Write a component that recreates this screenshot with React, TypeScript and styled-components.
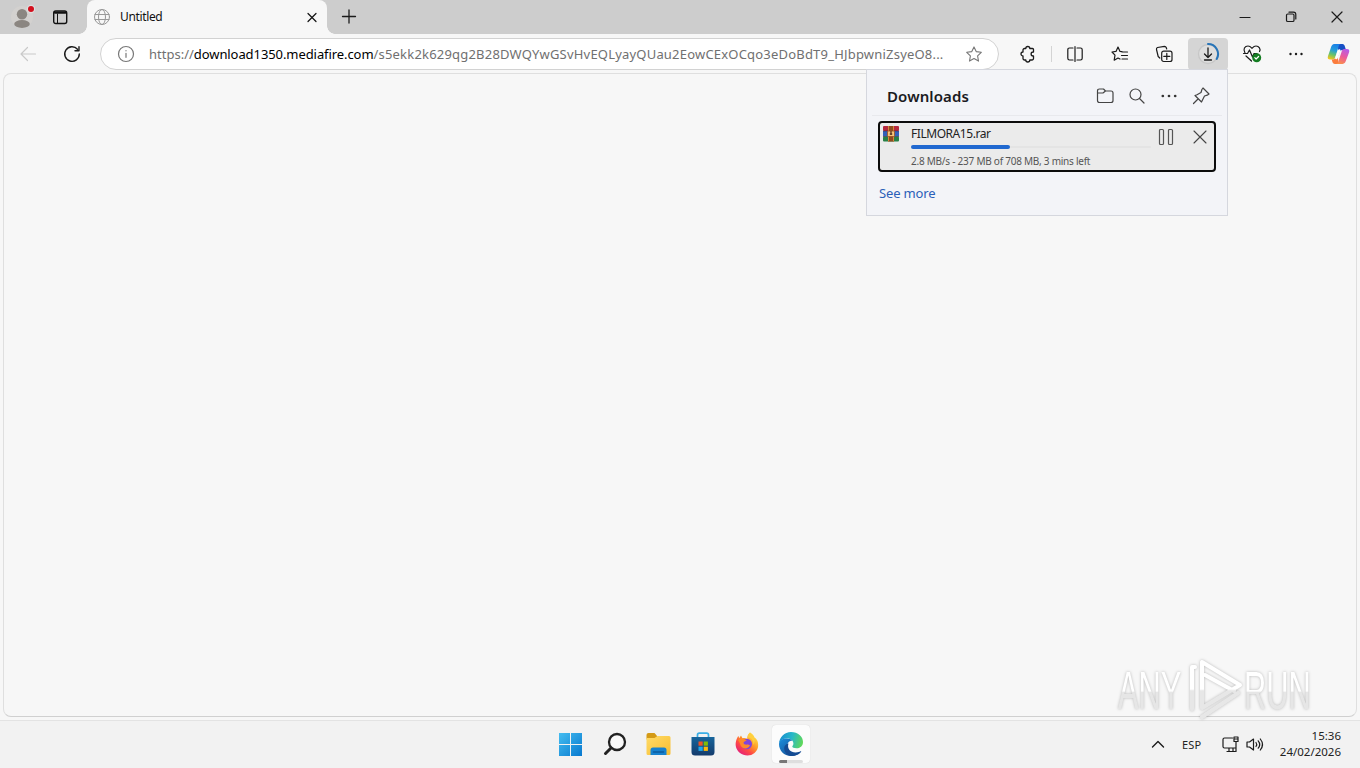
import React from 'react';
import styled, { createGlobalStyle } from 'styled-components';

const GlobalStyle = createGlobalStyle`
    * {
        box-sizing: border-box;
    }

    body {
        margin: 0;
        overflow: hidden;
        background: #f2f2f2;
        font-family: "Noto Sans", "Open Sans", sans-serif;
    }

    svg {
        display: block;
        flex: none;
        overflow: visible;
    }
`;

const Desktop = styled.div`
    width: 1360px;
    height: 768px;
    display: flex;
    flex-direction: column;
    background: #f7f7f7;
    color: #1b1b1b;
`;

/* Tab strip */

const TabStrip = styled.div`
    height: 34px;
    flex: none;
    display: flex;
    background: #cdcdcd;
`;

const StripStart = styled.div`
    width: 87px;
    display: flex;
    align-items: center;
    padding-left: 12px;
    gap: 18px;
`;

const Tab = styled.div`
    position: relative;
    width: 240px;
    height: 34px;
    display: flex;
    align-items: center;
    padding: 0 8px 0 7px;
    background: #f7f7f7;
    border-radius: 8px 8px 0 0;

    &::before,
    &::after {
        content: "";
        position: absolute;
        bottom: 0;
        width: 8px;
        height: 8px;
    }

    &::before {
        left: -8px;
        background: radial-gradient(circle at 0 0, #cdcdcd 7.5px, #f7f7f7 8px);
    }

    &::after {
        right: -8px;
        background: radial-gradient(circle at 100% 0, #cdcdcd 7.5px, #f7f7f7 8px);
    }
`;

const TabTitle = styled.span`
    flex: 1;
    margin-left: 10px;
    font-size: 12px;
    line-height: 16px;
    letter-spacing: -0.35px;
    color: #111;
`;

const NewTab = styled.div`
    width: 43px;
    display: grid;
    place-items: center;
`;

const WindowButtons = styled.div`
    display: flex;
    margin-left: auto;
`;

const WindowButton = styled.div`
    width: 46px;
    display: grid;
    place-items: center;
`;

/* Toolbar */

const Toolbar = styled.div`
    height: 39px;
    flex: none;
    display: flex;
    align-items: flex-start;
    padding-top: 4px;
`;

const ToolButton = styled.div<{ $width: number; $active?: boolean }>`
    width: ${({ $width }) => $width}px;
    height: 32px;
    flex: none;
    display: grid;
    place-items: center;
    border-radius: 4px;
    background: ${({ $active }) => ($active ? '#d5d5d5' : 'transparent')};
`;

const Divider = styled.div`
    width: 1px;
    height: 16px;
    margin: 8px 1px 0 3px;
    background: #d4d4d4;
`;

const AddressBar = styled.div`
    width: 899px;
    height: 32px;
    display: flex;
    align-items: center;
    margin: 0 8px 0 12px;
    padding: 0 15px 0 17px;
    background: #fff;
    border: 1px solid #d2d2d2;
    border-radius: 16px;
`;

const Url = styled.div`
    width: 797px;
    margin: 0 20px 0 15px;
    display: flex;
    font-size: 13px;
    line-height: 18px;
    white-space: nowrap;
    color: #707070;
`;

const UrlPart = styled.span<{ $spacing: number; $strong?: boolean }>`
    letter-spacing: ${({ $spacing }) => $spacing}px;
    color: ${({ $strong }) => ($strong ? '#000' : 'inherit')};
`;

/* Page */

const PageArea = styled.div`
    position: relative;
    height: 644px;
    flex: none;
    margin: 0 3px;
    border: 1px solid #dfdfdf;
    border-bottom-color: #d0d0d0;
    border-radius: 8px;
    background: #f7f7f7;
`;

const Watermark = styled.div`
    position: absolute;
    left: 1114px;
    top: 584px;
    width: 196px;
    height: 62px;
    display: flex;
    align-items: center;
    filter: drop-shadow(0 0 1.5px rgba(0, 0, 0, 0.25));
`;

const MarkWord = styled.div<{ $width: number }>`
    width: ${({ $width }) => $width}px;
    height: 62px;
    flex: none;

    span {
        display: block;
        width: 125px;
        font-family: "Liberation Sans", Arial, sans-serif;
        font-size: 54px;
        line-height: 64px;
        transform: scaleX(0.57);
        transform-origin: 0 0;
        color: transparent;
        background: linear-gradient(#fff 52%, #e6e6e6 53%);
        background-clip: text;
    }
`;

/* Downloads flyout */

const Flyout = styled.div`
    position: absolute;
    left: 866px;
    top: 69px;
    width: 362px;
    height: 147px;
    background: #f3f4f8;
    border: 1px solid #d5d7de;
`;

const FlyoutHeader = styled.div`
    height: 46px;
    margin: 0 5px;
    display: flex;
    align-items: center;
    padding: 6px 12px 0 15px;
    border-bottom: 1px solid #e8e9ed;
`;

const FlyoutTitle = styled.div`
    flex: 1;
    font-size: 15px;
    line-height: 20px;
    font-weight: 600;
    letter-spacing: 0.1px;
    color: #1b1b1f;
`;

const FlyoutActions = styled.div`
    display: flex;
    gap: 14px;
`;

const DownloadItem = styled.div`
    width: 338px;
    height: 51px;
    display: flex;
    margin: 5px 0 0 11px;
    padding: 3px 6px 0 3px;
    background: #ebebeb;
    border: 2px solid #0c0c0c;
    border-radius: 4px;
`;

const DownloadInfo = styled.div`
    width: 240px;
    margin-left: 12px;
`;

const FileName = styled.div`
    font-size: 12px;
    line-height: 16px;
    letter-spacing: -0.45px;
    color: #222;
`;

const ProgressTrack = styled.div`
    height: 4px;
    margin-top: 3px;
    border-radius: 2px;
    background: linear-gradient(#ebebeb 25%, #e4e4e4 25%, #e4e4e4 75%, #ebebeb 75%);
`;

const ProgressFill = styled.div`
    height: 4px;
    border-radius: 2px;
    background: #2169d0;
`;

const FileStatus = styled.div`
    margin-top: 5px;
    font-size: 10px;
    line-height: 14px;
    letter-spacing: -0.24px;
    white-space: nowrap;
    color: #555;
`;

const DownloadButtons = styled.div`
    display: flex;
    gap: 18px;
    margin-left: auto;
    padding-top: 3px;
`;

const SeeMore = styled.div`
    margin: 12px 0 0 12px;
    font-size: 13px;
    line-height: 18px;
    letter-spacing: -0.15px;
    color: #2b5fb8;
`;

/* Taskbar */

const Taskbar = styled.div`
    height: 48px;
    flex: none;
    margin-top: 3px;
    display: grid;
    grid-template-columns: 1fr auto 1fr;
    align-items: center;
    padding-bottom: 1px;
    border-top: 1px solid #e3e3e3;
    background: #f2f2f2;
`;

const Pinned = styled.div`
    grid-column: 2;
    display: flex;
    gap: 6px;
    padding-left: 1px;
`;

const PinnedApp = styled.div<{ $active?: boolean }>`
    position: relative;
    width: 38px;
    height: 38px;
    display: grid;
    place-items: center;
    border-radius: 4px;
    background: ${({ $active }) => ($active ? '#fcfcfc' : 'transparent')};
    box-shadow: ${({ $active }) => ($active ? '0 0 1px #ccc' : 'none')};
`;

const RunningMark = styled.div`
    position: absolute;
    left: 7px;
    bottom: 0;
    width: 24px;
    height: 3px;
    border-radius: 2px;
    background: linear-gradient(90deg, #777 8px, #dedede 8px);
`;

const Tray = styled.div`
    display: flex;
    align-items: center;
    justify-content: flex-end;
    padding-right: 19px;
`;

const Language = styled.div`
    width: 22px;
    margin: 0 18px 0 18px;
    font-size: 11px;
    letter-spacing: 0.2px;
    color: #222;
`;

const TrayIcons = styled.div`
    display: flex;
    gap: 7px;
`;

const Clock = styled.div`
    width: 63px;
    margin-left: 15px;
    font-size: 11.5px;
    line-height: 16px;
    text-align: right;
    white-space: nowrap;
    color: #222;
`;

interface LineIconProps {
    size?: number
    color?: string
    weight?: number
    children: React.ReactNode
}

const LineIcon: React.FC<LineIconProps> = ({ size = 16, color = '#1b1b1b', weight = 1.2, children }) => (
    <svg width={size} height={size} viewBox={`0 0 ${size} ${size}`} fill="none" stroke={color} strokeWidth={weight} strokeLinecap="round" strokeLinejoin="round">
        {children}
    </svg>
);

const Dots = ({ color = '#1b1b1b', size = 16 }) => (
    <svg width={size} height={size} viewBox="0 0 16 16" fill={color}>
        <circle cx="2.5" cy="8" r="1.2" />
        <circle cx="8" cy="8" r="1.2" />
        <circle cx="13.5" cy="8" r="1.2" />
    </svg>
);

const STAR = 'M8 .9l2.2 4.7 5.1.7-3.7 3.6.9 5.2L8 12.6l-4.5 2.5.9-5.2L.7 6.3l5.1-.7z';

const ProfileIcon = () => (
    <svg width="22" height="24" viewBox="0 0 22 24">
        <circle cx="10" cy="12" r="11" fill="#d3d1cf" />
        <circle cx="10" cy="9.2" r="5.2" fill="#8b8681" />
        <ellipse cx="10" cy="19" rx="7.8" ry="3.9" fill="#8b8681" />
        <circle cx="19" cy="4" r="4.2" fill="#dedede" />
        <circle cx="19" cy="4" r="3" fill="#d3101d" />
    </svg>
);

const CopilotIcon = () => (
    <svg width="23" height="22" viewBox="0 0 23 22">
        <defs>
            <linearGradient id="cpLeft" x1="0.6" y1="0" x2="0.3" y2="1">
                <stop offset="0" stopColor="#1b7fe8" />
                <stop offset=".4" stopColor="#249edb" />
                <stop offset=".7" stopColor="#69c46b" />
                <stop offset="1" stopColor="#f3c51c" />
            </linearGradient>
            <linearGradient id="cpRight" x1="0.7" y1="0" x2="0.3" y2="1">
                <stop offset="0" stopColor="#b65be8" />
                <stop offset=".5" stopColor="#ec5a9b" />
                <stop offset="1" stopColor="#fb9148" />
            </linearGradient>
        </defs>
        <path d="M11 1h4.5c1.3 0 1.9 1 2.3 2.2L19 7h-3.5c-2 0-2.6 1-3.2 3l-1.2 3z" fill="#1750c5" />
        <path d="M14 1H7.5C5.3 1 4.4 3 3.700 5.200L1 13c-.8 2.500.1 3.500 2.200 3.500h2.300c1.800 0 2.500-1.100 3-2.900l2.800-9.200C11.800 2.600 12.300 1 14 1z" fill="url(#cpLeft)" />
        <path d="M12 21H8c-1.600 0-2.300-1-2.700-2.500l-.6-2h1.200c1.800 0 2.300-1.100 2.900-2.900L10 11z" fill="#fb7c3d" />
        <path d="M9 21h6.500c2.200 0 3.100-2 3.800-4.200L22 9.500C22.800 7 21.900 6 19.800 6h-2.300c-1.800 0-2.500 1.100-3 2.900l-2.800 8.700C11.200 19.400 10.700 21 9 21z" fill="url(#cpRight)" />
        <path d="M12.300 7.500L9.300 15" stroke="#fff" strokeWidth="2.500" strokeLinecap="round" />
    </svg>
);

const ArchiveIcon = () => (
    <svg width="16" height="16" viewBox="0 0 16 16">
        <rect x="0" y="0" width="16" height="5" rx="1" fill="#b5293f" />
        <rect x="0" y="5" width="16" height="5.5" fill="#3360ba" />
        <rect x="0" y="10.5" width="16" height="5" rx="1" fill="#278046" />
        <path d="M0 5h16M0 10.500h16" stroke="#3b2531" strokeOpacity=".5" />
        <rect x="5" y="0" width="6" height="15.5" fill="#8f4b20" />
        <path d="M5.500 0v15.500M10.500 0v15.500" stroke="#d8843b" />
        <rect x="4.500" y="5" width="7" height="5.500" rx="1" fill="#f5c278" stroke="#9b4f1d" strokeWidth=".8" />
        <path d="M8 5v4M6.800 8h2.400" stroke="#573624" strokeWidth="1.300" />
    </svg>
);

const StartIcon = () => (
    <svg width="23" height="23" viewBox="0 0 23 23">
        <defs>
            <linearGradient id="win" x1="0" y1="0" x2="1" y2="1">
                <stop offset="0" stopColor="#45bdf0" />
                <stop offset="1" stopColor="#0879cf" />
            </linearGradient>
        </defs>
        <path d="M0 0h11v11H0zM12 0h11v11H12zM0 12h11v11H0zM12 12h11v11H12z" fill="url(#win)" />
    </svg>
);

const FolderIcon = () => (
    <svg width="25" height="23" viewBox="0 0 25 23">
        <defs>
            <linearGradient id="folder" x1="0" y1="0" x2="1" y2="1">
                <stop offset="0" stopColor="#ffdb68" />
                <stop offset="1" stopColor="#f7bd31" />
            </linearGradient>
        </defs>
        <path d="M.5 2q0-2 2-2h6l3 3.500-3 3h-8z" fill="#d49a16" />
        <path d="M.5 5h8l3-2H23q1.500 0 1.500 1.500v16q0 1.500-1.500 1.500H2Q.5 22 .5 20.500z" fill="url(#folder)" />
        <path d="M4.500 22v-5q0-2.500 2.500-2.500h11q2.500 0 2.500 2.500v5z" fill="#1681ce" />
        <path d="M7.500 19h10" stroke="#0b5b9f" strokeWidth="1.500" strokeLinecap="round" />
    </svg>
);

const StoreIcon = () => (
    <svg width="24" height="24" viewBox="0 0 24 24">
        <defs>
            <linearGradient id="store" x1="0" y1="0" x2="0" y2="1">
                <stop offset="0" stopColor="#17659c" />
                <stop offset="1" stopColor="#143b6c" />
            </linearGradient>
        </defs>
        <path d="M6.500 6V3Q6.500 1.200 8.300 1.200h7.400q1.800 0 1.800 1.800v3" fill="none" stroke="#3aaee6" strokeWidth="1.700" />
        <path d="M.5 5h23v15q0 3.500-3.500 3.500H4Q.5 23.500.5 20z" fill="url(#store)" />
        <path d="M7.500 9.500h4.200v4.200H7.500z" fill="#f35325" />
        <path d="M12.700 9.500h4.200v4.200h-4.200z" fill="#81bc06" />
        <path d="M7.500 14.700h4.200v4.200H7.500z" fill="#20a8ee" />
        <path d="M12.700 14.700h4.200v4.200h-4.200z" fill="#ffba08" />
    </svg>
);

const FirefoxIcon = () => (
    <svg width="24" height="24" viewBox="0 0 24 24">
        <defs>
            <linearGradient id="fox" x1=".85" y1=".1" x2=".2" y2=".9">
                <stop offset="0" stopColor="#ffe34a" />
                <stop offset=".4" stopColor="#ff9a27" />
                <stop offset=".7" stopColor="#ff4a45" />
                <stop offset="1" stopColor="#e62476" />
            </linearGradient>
        </defs>
        <path d="M15 .5c3 1.500 4 3.500 4.500 5C20.600 6 22 8 22.500 9c1.500 5 .5 9-3 12-4 3.500-10.500 3.200-14.500 0C1 17.800-.2 13 1.200 8.500 1.700 6.700 2.500 5 3.500 4l.7 2.300L6 3.500l1.500 2.700c2.200-.4 3.500-.1 4.700.8C12 4 13 2 15 .5z" fill="url(#fox)" />
        <circle cx="11.700" cy="12" r="5.300" fill="#8144dc" />
        <path d="M3 8c3-2 6-1.500 8.700.3l-2.500 1.500c-1 .7-.7 2 .3 2.500 2 1 3.500-.5 5.500 1-1 3.500-7 4.700-9.200.5C4.900 11.800 4.500 9.500 3 8z" fill="#ff8a29" />
        <path d="M13 5.500c3.200.3 6 3 5.300 7.500 2-2.500 1.700-5.500.7-7.500-1-2-2.500-3.500-4-5-1.500 1.500-2 3-2 5z" fill="#ffcf3e" />
    </svg>
);

const EdgeIcon = () => (
    <svg width="24" height="24" viewBox="0 0 24 24">
        <defs>
            <linearGradient id="edgeTop" x1="0" y1=".4" x2="1" y2=".6">
                <stop offset="0" stopColor="#188fd0" />
                <stop offset=".5" stopColor="#28b8c8" />
                <stop offset="1" stopColor="#62d957" />
            </linearGradient>
            <linearGradient id="edgeLow" x1="0" y1="0" x2="1" y2="1">
                <stop offset="0" stopColor="#1b8fdc" />
                <stop offset="1" stopColor="#123f86" />
            </linearGradient>
        </defs>
        <path d="M0 12C.2 5 5.500 0 12 0c7 0 12 4.500 12 10 0 4-3 6.300-6.500 6.300-2.500 0-4.200-.8-4.200-1.700 0-.6 1.100-1.200 1.100-3C14.400 8.500 11.500 6.500 8 6.500 4 6.500 1 8.500 0 12z" fill="url(#edgeTop)" />
        <path d="M0 12c.3-3.500 3.500-5.500 7.500-5.500 2.700 0 4.800.8 5.900 2.200C10.500 8.300 8.300 10.500 8.300 14c0 4 3 7.500 8 7.500 2 0 3.700-.5 5.200-1.500C19.500 22.500 16 24 12 24 5 24 0 18.500 0 12z" fill="url(#edgeLow)" />
        <path d="M9.500 11.500c-1.800 5 2 9 7 9 2.500 0 4-.7 5-1.200.5-.3 1 .2.500.7-3 3.500-7 4.200-10 3.900C7.500 23 5 19.500 5.200 16c.2-2.500 2-4 4.300-4.500z" fill="#144b93" />
    </svg>
);

const PlayMark = () => (
    <svg width="58" height="62" viewBox="0 0 58 62" fill="none" strokeWidth="4" strokeLinejoin="round" strokeLinecap="round">
        <defs>
            <linearGradient id="play" gradientUnits="userSpaceOnUse" x1="0" y1="0" x2="0" y2="62">
                <stop offset=".5" stopColor="#fff" />
                <stop offset=".53" stopColor="#e7e7e7" />
            </linearGradient>
        </defs>
        <g stroke="url(#play)">
            <path d="M9 9H6v42" />
            <path d="M16 4v46l38-23z" />
            <path d="M19 17l29 16M16 59l36-24" />
        </g>
    </svg>
);

const App: React.FC = () => {
    const received = 237;
    const total = 708;
    // the bar is drawn a bit ahead of the received size
    const percent = (received / total) * 123.5;

    return (
        <Desktop>
            <GlobalStyle />
            <TabStrip>
                <StripStart>
                    <ProfileIcon />
                    <LineIcon size={16} weight={1.4} color="#111">
                        <rect x="1.700" y="2" width="13" height="12.500" rx="2" />
                        <path d="M3 3.600h10.500" strokeWidth="2.400" />
                        <path d="M5.500 5v9" strokeWidth="1" />
                    </LineIcon>
                </StripStart>
                <Tab>
                    <LineIcon color="#999" weight={1}>
                        <circle cx="8" cy="8" r="7.500" />
                        <ellipse cx="8" cy="8" rx="3.500" ry="7.500" />
                        <path d="M1 5.500h14M1 10.500h14" />
                    </LineIcon>
                    <TabTitle>Untitled</TabTitle>
                    <LineIcon size={14} color="#111">
                        <path d="M3 3.500l8 8M11 3.500l-8 8" />
                    </LineIcon>
                </Tab>
                <NewTab>
                    <LineIcon size={14} weight={1.3}>
                        <path d="M.5 6.500h13M7 0v13" />
                    </LineIcon>
                </NewTab>
                <WindowButtons>
                    <WindowButton>
                        <LineIcon size={10}><path d="M0 5.500h10" /></LineIcon>
                    </WindowButton>
                    <WindowButton>
                        <LineIcon size={10}>
                            <rect x=".5" y="2" width="7.500" height="7.500" rx="1.300" />
                            <path d="M3 .2h4.500q2.300 0 2.300 2.300V7" />
                        </LineIcon>
                    </WindowButton>
                    <WindowButton>
                        <LineIcon size={10}><path d="M0 0l10 10M10 0L0 10" /></LineIcon>
                    </WindowButton>
                </WindowButtons>
            </TabStrip>

            <Toolbar>
                <ToolButton $width={56}>
                    <LineIcon color="#c9c9c9"><path d="M15.500 8H1M7.500 1.500L1 8l6.500 6.500" /></LineIcon>
                </ToolButton>
                <ToolButton $width={32}>
                    <LineIcon weight={1.4}><path d="M13.500 3.200A7.300 7.300 0 1 0 15.300 8M15 .8v4h-4" /></LineIcon>
                </ToolButton>
                <AddressBar>
                    <LineIcon color="#777">
                        <circle cx="8" cy="8" r="7.500" />
                        <path d="M8 7.300v4M8 4.600v.2" />
                    </LineIcon>
                    <Url>
                        <UrlPart $spacing={0}>https://</UrlPart>
                        <UrlPart $spacing={-0.08} $strong>download1350.mediafire.com</UrlPart>
                        <UrlPart $spacing={0.2}>/s5ekk2k629qg2B28DWQYwGSvHvEQLyayQUau2EowCExOCqo3eDoBdT9_HJbpwniZsyeO8...</UrlPart>
                    </Url>
                    <LineIcon color="#777" weight={1.1}><path d={STAR} /></LineIcon>
                </AddressBar>
                <ToolButton $width={41}>
                    <LineIcon weight={1.3}>
                        <path d="M4.500 2.500h1.300a2 2 0 0 1 4 0h2.700a1 1 0 0 1 1 1V6h-.4a2 2 0 0 0 0 4h.4v2.500a1.500 1.500 0 0 1-1.500 1.500H9.800a2 2 0 0 1-4 0H4.500A1.500 1.500 0 0 1 3 12.500V10a2 2 0 0 1 0-4V4a1.500 1.500 0 0 1 1.500-1.500z" />
                    </LineIcon>
                </ToolButton>
                <Divider />
                <ToolButton $width={44}>
                    <LineIcon>
                        <path d="M6 2H2.500Q.8 2 .8 3.700v8.600Q.8 14 2.500 14H6M10 2h3.500q1.700 0 1.700 1.700v8.600q0 1.700-1.700 1.700H10M8 .5v15" />
                    </LineIcon>
                </ToolButton>
                <ToolButton $width={45}>
                    <LineIcon>
                        <path d="M10 5.700l-2-.3L6 1 4 5.400l-4 .6 3 3.200-.8 5L6 12l2 1M10 6h5.500M9.500 9.500h6M10 13h5.500" />
                    </LineIcon>
                </ToolButton>
                <ToolButton $width={46}>
                    <LineIcon>
                        <rect x="4.700" y="5.200" width="10.300" height="10.300" rx="2" />
                        <path d="M9.800 7.400v6M6.800 10.400h6M2.800 12l-1.600-1.500L-.5 3.500q-.3-1.500 1-2l7-1.200q1.300 0 1.700 1.200l.5 1.500" />
                    </LineIcon>
                </ToolButton>
                <ToolButton $width={40} $active>
                    <LineIcon size={22} weight={1.3}>
                        <circle cx="11" cy="11" r="9.500" stroke="#c7c7c7" fill="#dedede" />
                        <path d="M11 1a10 10 0 0 1 8.700 15" stroke="#2774b8" strokeWidth="2" />
                        <path d="M11 5v9.500M7.500 11L11 14.500l3.500-3.500M7.500 17h7" />
                    </LineIcon>
                </ToolButton>
                <ToolButton $width={48}>
                    <LineIcon size={18}>
                        <path d="M2 8C-.5 4 2 1 5 1c2 0 3 1.200 4 2.300C10 2.200 11 1 13 1c3 0 5 3 3.500 5.500M.5 8.500h4l2-3.500 3 7 1.500-3.500h3M3 11l5.500 5" />
                        <circle cx="13.700" cy="12.700" r="4.500" fill="#147d22" stroke="none" />
                        <path d="M11.800 12.700l1.300 1.300 2.500-2.500" stroke="#fff" />
                    </LineIcon>
                </ToolButton>
                <ToolButton $width={40}><Dots /></ToolButton>
                <ToolButton $width={44}><CopilotIcon /></ToolButton>
            </Toolbar>

            <PageArea>
                <Watermark>
                    <MarkWord $width={68}><span>ANY</span></MarkWord>
                    <PlayMark />
                    <MarkWord $width={66}><span>RUN</span></MarkWord>
                </Watermark>
            </PageArea>

            <Flyout>
                <FlyoutHeader>
                    <FlyoutTitle>Downloads</FlyoutTitle>
                    <FlyoutActions>
                        <LineIcon size={18} color="#444">
                            <path d="M1.500 5V4q0-2 2-2h4l2 2h5.500q2 0 2 2v7.500q0 2-2 2H3.500q-2 0-2-2zM1.500 6H7l2.500-2" />
                        </LineIcon>
                        <LineIcon size={18} color="#444">
                            <circle cx="7.500" cy="7.500" r="5.500" />
                            <path d="M11.500 11.500l4.500 4.500" />
                        </LineIcon>
                        <Dots color="#333" size={18} />
                        <LineIcon size={18} color="#444">
                            <path d="M11 1l6 6-1.800 1.200-2.700.8-2 4-1 2L3 8.500l2-.8 4-2.200.9-3zM6 12l-4.500 4.500" />
                        </LineIcon>
                    </FlyoutActions>
                </FlyoutHeader>
                <DownloadItem>
                    <ArchiveIcon />
                    <DownloadInfo>
                        <FileName>FILMORA15.rar</FileName>
                        <ProgressTrack>
                            <ProgressFill style={{ width: `${percent}%` }} />
                        </ProgressTrack>
                        <FileStatus>2.8 MB/s - 237 MB of 708 MB, 3 mins left</FileStatus>
                    </DownloadInfo>
                    <DownloadButtons>
                        <LineIcon color="#555">
                            <rect x="1.500" y=".5" width="4" height="15" rx="1" />
                            <rect x="10.500" y=".5" width="4" height="15" rx="1" />
                        </LineIcon>
                        <LineIcon color="#444" weight={1.1}>
                            <path d="M2 2l12 12M14 2L2 14" />
                        </LineIcon>
                    </DownloadButtons>
                </DownloadItem>
                <SeeMore>See more</SeeMore>
            </Flyout>

            <Taskbar>
                <Pinned>
                    <PinnedApp><StartIcon /></PinnedApp>
                    <PinnedApp>
                        <LineIcon size={22} color="#222" weight={2.3}>
                            <circle cx="13" cy="9" r="8" fill="#f9f9f9" />
                            <path d="M7 15l-5.500 5.500" strokeWidth="3" />
                        </LineIcon>
                    </PinnedApp>
                    <PinnedApp><FolderIcon /></PinnedApp>
                    <PinnedApp><StoreIcon /></PinnedApp>
                    <PinnedApp><FirefoxIcon /></PinnedApp>
                    <PinnedApp $active>
                        <EdgeIcon />
                        <RunningMark />
                    </PinnedApp>
                </Pinned>
                <Tray>
                    <LineIcon size={12} weight={1.4}><path d="M.5 9L6 3.500 11.500 9" /></LineIcon>
                    <Language>ESP</Language>
                    <TrayIcons>
                        <LineIcon size={17}>
                            <path d="M10.500 2H2.500q-1.500 0-1.500 1.500v7q0 1.500 1.500 1.500h11M5 15.500h8M7 12v3.500M11 12v3.500M14 6v9.500M12 1h4v4.500h-4zM12 3h4" />
                        </LineIcon>
                        <LineIcon size={17}>
                            <path d="M1 6v5h2.500L7.500 14V3L3.500 6zM10 6.500q1.500 2 0 4M12.200 4.800q3 3.700 0 7.400M14.300 3q4.400 5.500 0 11" />
                        </LineIcon>
                    </TrayIcons>
                    <Clock>
                        <div>15:36</div>
                        <div>24/02/2026</div>
                    </Clock>
                </Tray>
            </Taskbar>
        </Desktop>
    );
};

export default App;
